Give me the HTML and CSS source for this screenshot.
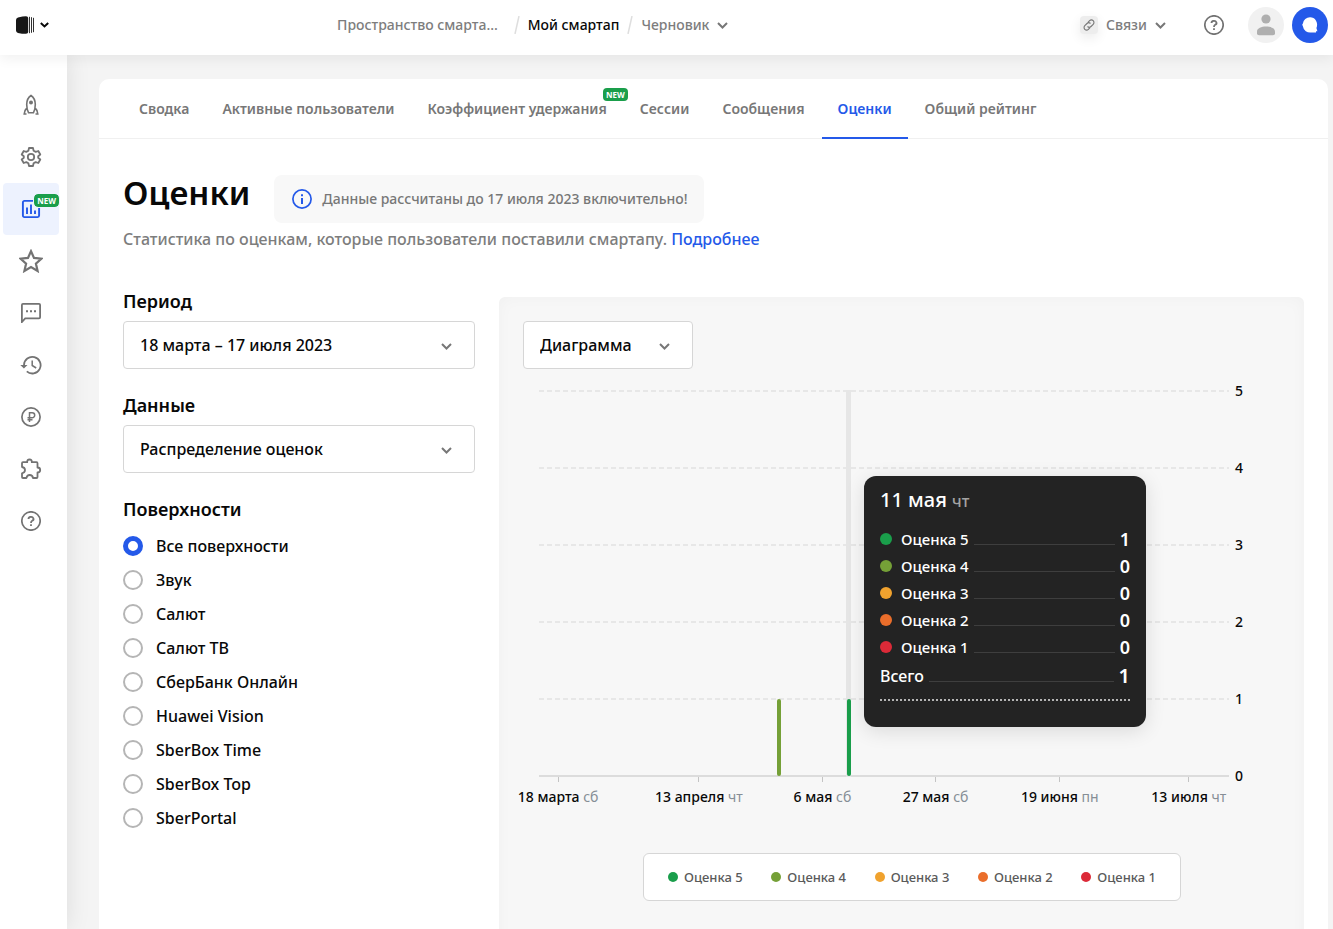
FILE: index.html
```
<!DOCTYPE html>
<html lang="ru">
<head>
<meta charset="utf-8">
<meta name="viewport" content="width=device-width, initial-scale=1">
<title>Оценки</title>
<link rel="stylesheet" href="styles.css">
</head>
<body>
<header class="header">
  <button class="logo" aria-label="Меню">
    <svg width="18" height="18" viewBox="0 0 18 18"><path d="M0 4Q0 2.200 2 1.600Q7 .2 10 .2Q12.200 .2 12.200 2V16Q12.200 17.800 10 17.800Q6 17.700 2 16.900Q0 16.500 0 14.600Z" fill="#171717"/><path d="M13.500 .8V17.200M15.500 1.200V16.800M17.500 1.800V16.200" stroke="#333" stroke-width="1"/></svg>
    <svg width="9" height="6" viewBox="0 0 9 6"><path d="M.8 1 4.500 4.400 8.200 1" fill="none" stroke="#080808" stroke-width="2"/></svg>
  </button>
  <nav class="crumbs">
    <a class="crumb" href="#">Пространство смарта…</a>
    <svg class="slash slash-wide" width="6" height="18" viewBox="0 0 6 18"><path d="M5 0 1 18" stroke="#dedede" stroke-width="1.500"/></svg>
    <a class="crumb crumb-current" href="#">Мой смартап</a>
    <svg class="slash" width="6" height="18" viewBox="0 0 6 18"><path d="M5 0 1 18" stroke="#dedede" stroke-width="1.500"/></svg>
    <button class="crumb menu">Черновик
      <svg width="11" height="7" viewBox="0 0 11 7"><path d="M1 1 5.500 5.500 10 1" fill="none" stroke="#777" stroke-width="2"/></svg>
    </button>
  </nav>
  <div class="tools">
    <button class="crumb menu"><span class="link-icon"><svg width="12" height="12" viewBox="0 0 12 12" fill="none" stroke="#777" stroke-width="1.100"><path d="M5 3.300 6.600 1.700a2.500 2.500 0 0 1 3.600 3.600L8 7.500a2.500 2.500 0 0 1-3.500 0M7 8.700 5.400 10.300A2.500 2.500 0 0 1 1.800 6.700L4 4.500a2.500 2.500 0 0 1 3.500 0"/></svg></span>Связи
      <svg width="11" height="7" viewBox="0 0 11 7"><path d="M1 1 5.500 5.500 10 1" fill="none" stroke="#777" stroke-width="2"/></svg>
    </button>
    <button class="help" aria-label="Помощь"><svg width="20" height="20" viewBox="0 0 20 20" fill="none" stroke="#737373"><circle cx="10" cy="10" r="9.200" stroke-width="1.700"/><path d="M7.500 8a2.500 2.100 0 1 1 3.700 1.800Q10 10.500 10 12" stroke-width="1.800"/><path d="M10 13.200v1.700" stroke-width="1.800"/></svg></button>
    <button class="avatar" aria-label="Профиль"><svg width="18" height="22" viewBox="0 0 18 22" fill="#afafaf"><circle cx="9" cy="5" r="4.600"/><path d="M0 17.500C0 14 4.500 12.500 9 12.500S18 14 18 17.500V19.500Q18 21.300 16 21.300H2Q0 21.300 0 19.500Z"/></svg></button>
    <button class="assistant" aria-label="Ассистент"><svg width="16" height="16" viewBox="0 0 16 16"><path d="M8 .2A7 7.500 0 0 1 14.400 11L15.400 14.200 14 14.300 14 15.400 9.500 15.500A7.500 7.600 0 0 1 .8 9L.2 7.700.9 6.500A7.200 7.200 0 0 1 8 .2Z" fill="#fff"/></svg></button>
  </div>
</header>
<div class="shell">
  <nav class="sidebar">
    <a class="side" href="#" aria-label="Запуск"><svg width="20" height="22" viewBox="0 0 20 22" fill="none" stroke="#737373" stroke-width="1.600"><path d="M10 1.500C7 3.500 5.700 6.500 5.700 10.500Q5.700 15 7.500 18.700H12.500Q14.300 15 14.300 10.500C14.300 6.500 13 3.500 10 1.500ZM5.500 14.500Q3.600 16 3.200 20H5.500M14.500 14.500Q16.400 16 16.800 20H14.500"/><circle cx="10" cy="8.600" r="2" fill="#737373" stroke="none"/></svg></a>
    <a class="side" href="#" aria-label="Настройки"><svg width="24" height="24" viewBox="0 0 24 24" fill="none" stroke="#737373" stroke-width="1.800" stroke-linejoin="round"><path d="M10 3h4l.6 2.700 2.100 1.200 2.600-.9 2 3.500-2.100 1.800v1.400l2.100 1.800-2 3.500-2.600-.9-2.100 1.200L14 21h-4l-.6-2.700-2.100-1.200-2.600.9-2-3.500 2.100-1.800v-1.400L2.700 9.500l2-3.500 2.600.9 2.100-1.200Z"/><circle cx="12" cy="12" r="3.200"/></svg></a>
    <a class="side side-active" href="#" aria-label="Аналитика"><svg width="20" height="20" viewBox="0 0 20 20" fill="none" stroke="#2459e9" stroke-width="1.900"><rect x="1.900" y="1.900" width="16.200" height="16.200" rx="1.500"/><path d="M6 8.500V15M10 5.500V15M14 11.500V15"/></svg><span class="badge side-badge">NEW</span></a>
    <a class="side" href="#" aria-label="Оценки"><svg width="24" height="24" viewBox="0 0 24 24" fill="none" stroke="#737373" stroke-width="2.200"><path d="M12 2.200 15 8.900 22.500 9.700 16.900 14.600 18.600 22 12 18.100 5.400 22 7.100 14.600 1.500 9.700 9 8.900Z"/></svg></a>
    <a class="side" href="#" aria-label="Сообщения"><svg width="20" height="20" viewBox="0 0 20 20" fill="none" stroke="#737373" stroke-width="1.800"><path d="M.9 19V2Q.9.900 2 .9H18Q19.100.900 19.100 2V14.300Q19.100 15.400 18 15.400H4.200Z"/><path d="M5 8.200h2M9 8.200h2M13 8.200h2" stroke-width="2"/></svg></a>
    <a class="side" href="#" aria-label="История"><svg width="22" height="20" viewBox="0 0 22 20" fill="none" stroke="#737373" stroke-width="1.800"><path d="M4 10A8.300 8.300 0 1 1 6.800 16.400"/><path d="M.3 10H7.500L3.900 13.500Z" fill="#737373" stroke="none"/><path d="M12.200 5.500V10.500L16.200 13" stroke-width="1.500"/></svg></a>
    <a class="side" href="#" aria-label="Монетизация"><svg width="20" height="20" viewBox="0 0 20 20" fill="none" stroke="#737373" stroke-width="1.700"><circle cx="10" cy="10" r="9.100"/><path d="M8.500 15V5.700H11.200A2.500 2.500 0 0 1 11.200 10.700H6.500M6.500 12.800H11.500" stroke-width="1.500"/></svg></a>
    <a class="side" href="#" aria-label="Интеграции"><svg width="24" height="24" viewBox="0 0 24 24" fill="none" stroke="#737373" stroke-width="1.800" stroke-linejoin="round"><path d="M3 6.200Q3 5.200 4 5.200H8.200Q8 2.500 10.500 2.500T12.800 5.200H17.500Q18.500 5.200 18.500 6.200V10.500Q21.200 10.500 21.200 13T18.500 15.500V20Q18.500 21 17.500 21H14Q13.500 18 10.700 18T7.500 21H4Q3 21 3 20V16.300Q6 15.800 6 13.100T3 10Z"/></svg></a>
    <a class="side" href="#" aria-label="Помощь"><svg width="20" height="20" viewBox="0 0 20 20" fill="none" stroke="#737373"><circle cx="10" cy="10" r="9.200" stroke-width="1.700"/><path d="M7.500 8a2.500 2.100 0 1 1 3.700 1.800Q10 10.500 10 12" stroke-width="1.800"/><path d="M10 13.200v1.700" stroke-width="1.800"/></svg></a>
  </nav>
  <main class="card">
    <nav class="tabs">
      <a class="tab" href="#">Сводка</a>
      <a class="tab" href="#">Активные пользователи</a>
      <a class="tab" href="#">Коэффициент удержания<span class="badge tab-badge">NEW</span></a>
      <a class="tab" href="#">Сессии</a>
      <a class="tab" href="#">Сообщения</a>
      <a class="tab tab-active" href="#">Оценки</a>
      <a class="tab" href="#">Общий рейтинг</a>
    </nav>
    <div class="content">
      <div class="heading">
        <h1 class="title">Оценки</h1>
        <div class="notice"><svg width="20" height="20" viewBox="0 0 20 20" fill="none" stroke="#2459e9"><circle cx="10" cy="10" r="9.100" stroke-width="1.700"/><path d="M10 9v6M10 5.200v2" stroke-width="2"/></svg>Данные рассчитаны до 17 июля 2023 включительно!</div>
      </div>
      <p class="lead">Статистика по оценкам, которые пользователи поставили смартапу. <a class="more" href="#">Подробнее</a></p>
      <div class="columns">
        <form class="filters">
          <label class="label" for="period">Период</label>
          <div class="select-box"><select class="select" id="period"><option>18 марта – 17 июля 2023</option></select><svg class="chevron" width="11" height="7" viewBox="0 0 11 7"><path d="M1 1 5.500 5.500 10 1"/></svg></div>
          <label class="label" for="data">Данные</label>
          <div class="select-box"><select class="select" id="data"><option>Распределение оценок</option></select><svg class="chevron" width="11" height="7" viewBox="0 0 11 7"><path d="M1 1 5.500 5.500 10 1"/></svg></div>
          <fieldset class="surfaces">
            <legend class="label">Поверхности</legend>
            <label class="option"><input class="radio" type="radio" name="s" checked>Все поверхности</label>
            <label class="option"><input class="radio" type="radio" name="s">Звук</label>
            <label class="option"><input class="radio" type="radio" name="s">Салют</label>
            <label class="option"><input class="radio" type="radio" name="s">Салют ТВ</label>
            <label class="option"><input class="radio" type="radio" name="s">СберБанк Онлайн</label>
            <label class="option"><input class="radio" type="radio" name="s">Huawei Vision</label>
            <label class="option"><input class="radio" type="radio" name="s">SberBox Time</label>
            <label class="option"><input class="radio" type="radio" name="s">SberBox Top</label>
            <label class="option"><input class="radio" type="radio" name="s">SberPortal</label>
          </fieldset>
        </form>
        <section class="panel">
          <div class="select-box view-box"><select class="select" aria-label="Вид"><option>Диаграмма</option></select><svg class="chevron" width="11" height="7" viewBox="0 0 11 7"><path d="M1 1 5.500 5.500 10 1"/></svg></div>
          <div class="chart">
            <div class="plot">
              <div class="grid"><i class="line"></i><i class="line"></i><i class="line"></i><i class="line"></i><i class="line"></i><i class="line base"></i></div>
              <div class="cursor" style="left:44.9%"></div>
              <div class="bar c4" style="left:34.800%"></div>
              <div class="bar c5" style="left:44.900%"></div>
              <div class="tick" style="left:2.700%"><span>18 марта <span class="day">сб</span></span></div>
              <div class="tick" style="left:23.100%"><span>13 апреля <span class="day">чт</span></span></div>
              <div class="tick" style="left:41%"><span>6 мая <span class="day">сб</span></span></div>
              <div class="tick" style="left:57.400%"><span>27 мая <span class="day">сб</span></span></div>
              <div class="tick" style="left:75.400%"><span>19 июня <span class="day">пн</span></span></div>
              <div class="tick" style="left:94.100%"><span>13 июля <span class="day">чт</span></span></div>
              <div class="tooltip" style="left:47.100%">
                <div class="tip-date">11 мая <span class="tip-day">чт</span></div>
                <div class="tip-row"><i class="dot c5"></i>Оценка 5<i class="rule"></i><b class="value">1</b></div>
                <div class="tip-row"><i class="dot c4"></i>Оценка 4<i class="rule"></i><b class="value">0</b></div>
                <div class="tip-row"><i class="dot c3"></i>Оценка 3<i class="rule"></i><b class="value">0</b></div>
                <div class="tip-row"><i class="dot c2"></i>Оценка 2<i class="rule"></i><b class="value">0</b></div>
                <div class="tip-row"><i class="dot c1"></i>Оценка 1<i class="rule"></i><b class="value">0</b></div>
                <div class="tip-row tip-total">Всего<i class="rule"></i><b class="value">1</b></div>
              </div>
            </div>
            <div class="axis"><span>5</span><span>4</span><span>3</span><span>2</span><span>1</span><span>0</span></div>
          </div>
          <div class="legend">
            <span class="key"><i class="dot c5"></i>Оценка 5</span>
            <span class="key"><i class="dot c4"></i>Оценка 4</span>
            <span class="key"><i class="dot c3"></i>Оценка 3</span>
            <span class="key"><i class="dot c2"></i>Оценка 2</span>
            <span class="key"><i class="dot c1"></i>Оценка 1</span>
          </div>
        </section>
      </div>
    </div>
  </main>
</div>
</body>
</html>
```
FILE: styles.css
```
* { box-sizing: border-box; }
html { height: 100%; }
body {
  margin: 0;
  height: 100%;
  display: flex;
  flex-direction: column;
  overflow: hidden;
  background: #f4f4f4;
  color: #080808;
  font: 500 16px/24px "Noto Sans", sans-serif;
}
button { border: 0; padding: 0; background: none; font: inherit; }
a { text-decoration: none; color: inherit; }
svg { display: block; flex: none; }

.header {
  position: relative;
  z-index: 2;
  display: flex;
  align-items: center;
  flex: none;
  height: 55px;
  padding: 0 5px 5px 16px;
  background: #fff;
  box-shadow: 0 4px 12px rgba(0, 0, 0, .06);
}
.logo { display: flex; align-items: center; gap: 6px; }
.crumbs { display: flex; align-items: center; margin-left: 288px; }
.crumb { color: #7d7d7d; font-weight: 500; white-space: nowrap; font-size: 14px; }
.crumb-current { color: #080808; font-weight: 500; }
.slash { margin: 0 8px; }
.slash-wide { margin-left: 16px; }
.menu { display: flex; align-items: center; gap: 8px; }
.tools { display: flex; align-items: center; margin-left: auto; }
.link-icon {
  display: grid;
  place-items: center;
  width: 18px;
  height: 18px;
  border-radius: 4px;
  background: #ededed;
  box-shadow: 0 4px 12px rgba(0, 0, 0, .08);
}
.help { margin: 0 24px 0 38px; }
.avatar, .assistant {
  display: grid;
  place-items: center;
  width: 36px;
  height: 36px;
  border-radius: 50%;
  background: #f1f1f1;
}
.assistant { margin-left: 8px; background: #2459e9; }

.shell { display: flex; flex: 1; min-height: 0; }
.sidebar {
  flex: none;
  width: 67px;
  padding: 24px 8px 0 3px;
  background: #fff;
  box-shadow: 0 0 24px rgba(0, 0, 0, .1);
}
.side {
  position: relative;
  display: grid;
  place-items: center;
  height: 52px;
  border-radius: 4px;
}
.side-active { background: #edf2fe; }
.badge {
  position: absolute;
  padding: 0 3px;
  border-radius: 4px;
  background: #1a9e4b;
  color: #fff;
  font-size: 8px;
  font-weight: 700;
  line-height: 13px;
}
.side-badge { top: 11px; right: 0; outline: 1px solid #edf2fe; }
.tab-badge { top: 9px; right: -5px; }

.card {
  position: relative;
  z-index: 1;
  flex: 1;
  min-width: 0;
  margin: 24px 5px 0 32px;
  border-radius: 10px 10px 0 0;
  background: #fff;
  overflow: hidden;
}
.tabs { display: flex; gap: 1px; height: 60px; padding: 0 24px; border-bottom: 1px solid #f0f0f0; }
.tab {
  position: relative;
  height: 60px;
  padding: 0 16px;
  color: #777;
  font-size: 14px;
  font-weight: 600;
  line-height: 60px;
  white-space: nowrap;
}
.tab-active { color: #2459e9; border-bottom: 2px solid #2459e9; }

.content { padding: 36px 24px 0; }
.heading { display: flex; gap: 24px; }
.title { margin: 0; font-size: 33px; line-height: 35px; font-weight: 600; }
.notice {
  display: flex;
  align-items: center;
  gap: 10px;
  height: 48px;
  padding: 0 16px 0 18px;
  border-radius: 8px;
  background: #f8f8f8;
  color: #777;
  font-size: 14px;
}
.lead { margin: 4px 0 0; color: #7d7d7d; }
.more { color: #2459e9; }

.columns { display: flex; gap: 24px; margin-top: 38px; }
.filters { flex: none; width: 352px; }
.label { display: block; padding: 0; margin-bottom: 8px; font-size: 18px; line-height: 24px; font-weight: 600; }
.select-box { position: relative; height: 48px; margin-bottom: 24px; }
.select {
  appearance: none;
  width: 100%;
  height: 100%;
  padding: 0 16px;
  border: 1px solid #d6d6d6;
  border-radius: 4px;
  background: #fff;
  color: #080808;
  font: inherit;
}
.chevron { position: absolute; right: 23px; top: 22px; fill: none; stroke: #777; stroke-width: 2; }
.surfaces { border: 0; margin: 0; padding: 0; min-width: 0; }
.option { display: flex; align-items: center; gap: 13px; height: 34px; }
.radio {
  appearance: none;
  width: 20px;
  height: 20px;
  margin: 0;
  border: 2px solid #b5b5b5;
  border-radius: 50%;
  background: #fff;
}
.radio:checked { border: 5px solid #2459e9; }

.panel {
  flex: 1;
  min-width: 0;
  height: 100vh;
  margin-top: 8px;
  padding: 24px;
  border-radius: 6px;
  background: #f7f7f7;
  box-shadow: inset 0 0 16px rgba(0, 0, 0, .03);
}
.view-box { width: 170px; margin-bottom: 21px; }
.chart { display: flex; gap: 6px; padding: 0 29px 0 16px; }
.plot { position: relative; flex: 1; height: 387px; }
.grid { display: flex; flex-direction: column; justify-content: space-between; height: 100%; }
.line { height: 2px; background: repeating-linear-gradient(90deg, #e7e7e7 0 5px, transparent 5px 8px); }
.base { background: #dcdcdc; }
.cursor { position: absolute; top: 0; bottom: 0; width: 5px; margin-left: -3px; background: #e6e6e6; }
.bar { position: absolute; bottom: 1px; width: 4px; height: 77px; margin-left: -2px; border-radius: 2px; }
.c5 { background: #1a9e4b; }
.c4 { background: #75a037; }
.c3 { background: #f0a22e; }
.c2 { background: #ea6e2b; }
.c1 { background: #dc2a38; }
.tick {
  position: absolute;
  top: 100%;
  display: flex;
  justify-content: center;
  width: 1px;
  height: 5px;
  background: #c4c4c4;
  font-size: 14px;
  line-height: 20px;
  white-space: nowrap;
}
.tick > span { padding-top: 10px; }
.day { color: #868e96; font-weight: 400; }
.axis {
  display: flex;
  flex-direction: column;
  justify-content: space-between;
  width: 16px;
  margin: -9px 0;
  font-size: 14px;
  line-height: 20px;
}
.tooltip {
  position: absolute;
  z-index: 1;
  top: 86px;
  width: 282px;
  padding: 12px 16px 26px;
  border-radius: 12px;
  background: #232323;
  box-shadow: 0 4px 20px rgba(0, 0, 0, .12);
  color: #fff;
  font-size: 15px;
}
.tip-date { margin-bottom: 12px; font-size: 20px; line-height: 24px; }
.tip-day { color: #a3a3a3; font-size: 16px; }
.tip-row { display: flex; align-items: center; height: 27px; }
.dot { flex: none; width: 12px; height: 12px; margin-right: 9px; border-radius: 50%; }
.rule { flex: 1; height: 12px; margin: 0 5px; border-bottom: 1px solid #3e3e3e; }
.value { font-size: 18px; font-weight: 600; }
.tip-total { height: 41px; padding-bottom: 8px; border-bottom: 2px dotted #b4b4b4; font-size: 16px; }
.tip-total .value { font-size: 20px; }

.legend {
  display: flex;
  justify-content: space-between;
  width: 538px;
  height: 48px;
  margin: 76px 99px 0 auto;
  padding: 0 24px;
  border: 1px solid #d6d6d6;
  border-radius: 6px;
  background: #fff;
  color: #5a5a5a;
  font-size: 13px;
  line-height: 46px;
}
.key { display: flex; align-items: center; }
.key .dot { width: 10px; height: 10px; margin-right: 6px; }
```
